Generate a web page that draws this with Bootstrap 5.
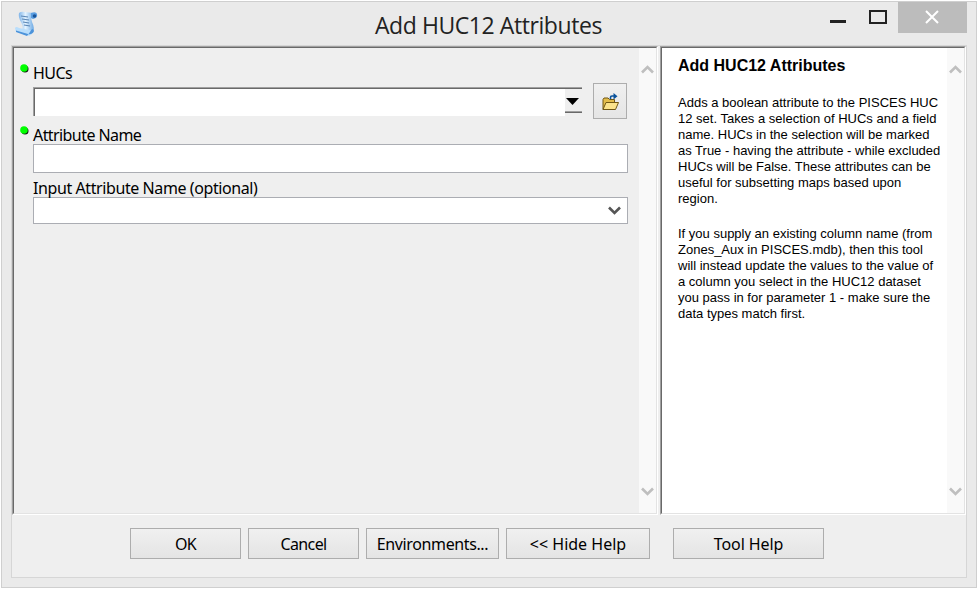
<!DOCTYPE html>
<html lang="en">
<head>
<meta charset="utf-8">
<title>Add HUC12 Attributes</title>
<link href="https://cdn.jsdelivr.net/npm/bootstrap@5.3.0/dist/css/bootstrap.min.css" rel="stylesheet">
<style>
body{width:978px;height:589px;overflow:hidden;background:#fff;color:#000;font-family:"Noto Sans","Open Sans",sans-serif;font-size:16px;line-height:20px;padding:1px}
svg{display:block;flex:none}
.win{width:976px;height:587px;background:#eaeaea;border:1px solid #cfcfcf;padding:0 9px}
.titlebar{height:43px}
.script-icon{margin:8px 0 0 3px}
.caption{font-family:"Open Sans","Noto Sans",sans-serif;font-size:23px;line-height:32px;color:#222;margin:7px 0 0 335px;white-space:nowrap;letter-spacing:-.43px}
.closer{width:69px;height:31px;background:#bcbcbc}
.client{height:533px;background:#efefef;border:1px solid #d6d6d6}
.panes{height:469px;gap:2px}
.sunken{border:1px solid;border-color:#a0a0a0 #fff #fff #a0a0a0}
.sunken>.inset{border:1px solid;border-color:#696969 #e3e3e3 #e3e3e3 #696969;height:467px}
.form-pane{width:646px}
.help-pane{width:306px}
.help-pane .inset{background:#fff}
.vbar{width:17px;background:#f9f9f9;padding:16px 0 16px 2px}
.fields{width:625px;padding:15px 0 0 6px}
.lbl{height:20px;white-space:nowrap;letter-spacing:-.58px}
.lbl-low{line-height:22px}
.lbl-wide{letter-spacing:-.41px}
.dot-cell{width:13px;flex:none}
.gap-above{margin-top:5px}
.combo{width:549px;height:29px;margin-left:13px;background:#fff;border-top:1px solid #a0a0a0;border-left:1px solid #a0a0a0}
.combo>div{border-top:1px solid #696969;border-left:1px solid #696969}
.drop{width:17px;background:#efefef;padding:7px 0 0 1px}
.drop-line{height:2px;margin-left:-1px;background:linear-gradient(#a0a0a0 50%,#696969 50%)}
.browse{width:34px;height:36px;margin-left:11px;border:1px solid #adadad;background:linear-gradient(#f0f0f0,#e5e5e5);padding:9px 0 0 7px}
.box{width:595px;border:1px solid #abadb3;background:#fff;margin-left:13px}
.box-text{height:29px}
.box-select{height:27px;padding:8px 6px 0 0}
.help-text{width:285px;padding:8px 0 0 16px;font-family:"Liberation Sans",Arial,sans-serif;font-size:13px;line-height:16px}
.help-text h1{font-size:16px;line-height:20px;font-weight:700;margin:0 0 19px}
.help-text p{margin:0 0 19px;white-space:nowrap;letter-spacing:0}
.actions{padding:13px 0 0 118px;gap:7px}
.act{height:31px;border:1px solid #adadad;border-radius:0;background:linear-gradient(#f0f0f0,#e4e4e4);padding:1px 0 0;line-height:20px;font-size:16px;letter-spacing:-.6px;color:#000;white-space:nowrap}
.w-std{width:111px}
.w-env{width:133px;letter-spacing:-.38px}
.w-hide{width:144px;letter-spacing:0}
.w-tool{width:151px;margin-left:16px;letter-spacing:-.1px}
</style>
</head>
<body>
<div class="win">
  <div class="titlebar d-flex align-items-start">
    <svg class="script-icon" width="26" height="28" viewBox="0 0 26 28"><defs><linearGradient id="pg"><stop stop-color="#7fb4e8"/><stop offset=".45" stop-color="#e4f3ff"/><stop offset="1" stop-color="#6eaae4"/></linearGradient></defs><path d="M5 3Q7 1 11 2L19 3Q16 6 18 12Q21 18 19 23L8 22Q10 17 7 12Q4 7 5 3Z" fill="url(#pg)"/><path d="M17 3Q22 1 23 4Q24 8 19 9L17 8Z" fill="#5a9de0"/><circle cx="20.5" cy="6" r="1.8" fill="#1b5599"/><path d="M1 18Q2 16 5 18L15 20Q19 20 18 24L15 26L3 22Q1 21 1 18Z" fill="#b9defc"/><path d="M2 20.500L14 24Q18 25 20 21L19 19Q17 19 16 22L13 26L2 22Z" fill="#4c93da"/><path d="M7 6L14 7M8 9L15 10M9 12L15 13M10 15L16 16" stroke="#5b86b5" stroke-width="1.100"/></svg>
    <div class="caption">Add HUC12 Attributes</div>
    <div class="ms-auto d-flex">
      <svg width="70" height="31"><path d="M2 19.500h16" stroke="#222" stroke-width="3"/><rect x="42" y="9" width="16" height="12" fill="none" stroke="#222" stroke-width="2"/></svg>
      <div class="closer"><svg width="69" height="31"><path d="M28 9L40 21M40 9L28 21" stroke="#fff" stroke-width="2"/></svg></div>
    </div>
  </div>
  <div class="client">
    <div class="panes d-flex">
      <div class="form-pane sunken"><div class="inset d-flex">
        <div class="fields">
          <div class="lbl d-flex"><div class="dot-cell"><svg width="9" height="10"><circle cx="5" cy="6" r="3.500" fill="#111"/><circle cx="4" cy="5" r="3.800" fill="#0f0"/></svg></div><span>HUCs</span></div>
          <div class="d-flex">
            <div class="combo mt-1"><div class="d-flex h-100 justify-content-end"><div class="drop"><svg width="15" height="15"><path d="M0 2h13L6.500 9Z"/></svg><div class="drop-line"></div></div></div></div>
            <div class="browse"><svg width="19" height="18"><path d="M2 16.500V6.500L3 5H7L8.500 6.500H13.500V9" fill="#e3bd4b" stroke="#705714"/><path d="M2 16.500L5 9.500H17.500L14.500 16.500Z" fill="#fbe38b" stroke="#705714"/><path d="M9.500 6V4.500Q9.500 3 11 3H13" fill="none" stroke="#0a529b" stroke-width="1.600"/><path d="M12.500 0L16.500 3.200L12.500 6.500Z" fill="#0a529b"/></svg></div>
          </div>
          <div class="lbl lbl-low gap-above d-flex"><div class="dot-cell"><svg width="9" height="11"><circle cx="5" cy="7" r="3.500" fill="#111"/><circle cx="4" cy="6" r="3.800" fill="#0f0"/></svg></div><span>Attribute Name</span></div>
          <div class="box box-text"></div>
          <div class="lbl lbl-low lbl-wide mt-1 d-flex"><div class="dot-cell"></div><span>Input Attribute Name (optional)</span></div>
          <div class="box box-select d-flex justify-content-end"><svg width="13" height="10"><path d="M1 1.500L6.500 7L12 1.500" fill="none" stroke="#555" stroke-width="2.600"/></svg></div>
        </div>
        <div class="vbar d-flex flex-column justify-content-between">
          <svg width="13" height="10"><path d="M1 8.500L6.500 3L12 8.500" fill="none" stroke="#bfbfbf" stroke-width="2.600"/></svg>
          <svg width="13" height="10"><path d="M1 1.500L6.500 7L12 1.500" fill="none" stroke="#bfbfbf" stroke-width="2.600"/></svg>
        </div>
      </div></div>
      <div class="help-pane sunken"><div class="inset d-flex">
        <div class="help-text">
          <h1>Add HUC12 Attributes</h1>
          <p>Adds a boolean attribute to the PISCES HUC<br>12 set. Takes a selection of HUCs and a field<br>name. HUCs in the selection will be marked<br>as True - having the attribute - while excluded<br>HUCs will be False. These attributes can be<br>useful for subsetting maps based upon<br>region.</p>
          <p>If you supply an existing column name (from<br>Zones_Aux in PISCES.mdb), then this tool<br>will instead update the values to the value of<br>a column you select in the HUC12 dataset<br>you pass in for parameter 1 - make sure the<br>data types match first.</p>
        </div>
        <div class="vbar d-flex flex-column justify-content-between">
          <svg width="13" height="10"><path d="M1 8.500L6.500 3L12 8.500" fill="none" stroke="#bfbfbf" stroke-width="2.600"/></svg>
          <svg width="13" height="10"><path d="M1 1.500L6.500 7L12 1.500" fill="none" stroke="#bfbfbf" stroke-width="2.600"/></svg>
        </div>
      </div></div>
    </div>
    <div class="actions d-flex">
      <button class="btn act w-std">OK</button>
      <button class="btn act w-std">Cancel</button>
      <button class="btn act w-env">Environments...</button>
      <button class="btn act w-hide">&lt;&lt; Hide Help</button>
      <button class="btn act w-tool">Tool Help</button>
    </div>
  </div>
</div>
<script src="https://cdn.jsdelivr.net/npm/bootstrap@5.3.0/dist/js/bootstrap.bundle.min.js"></script>
</body>
</html>
